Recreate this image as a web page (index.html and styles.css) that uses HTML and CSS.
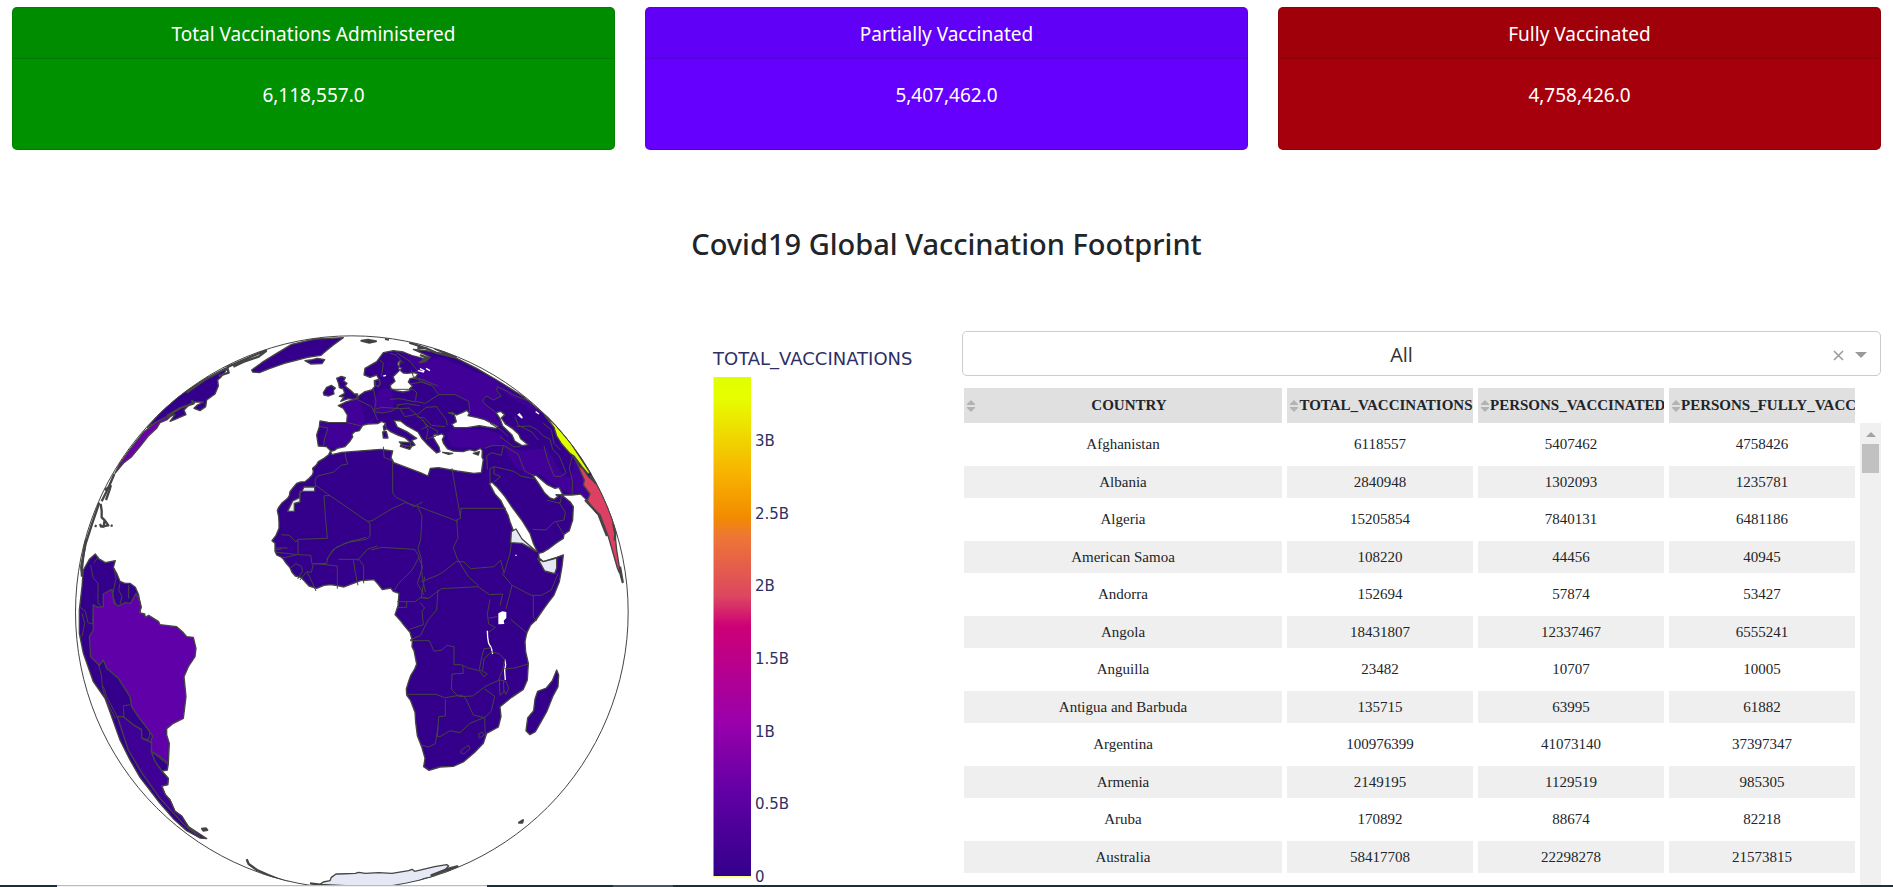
FILE: index.html
```
<!DOCTYPE html>
<html lang="en">
<head>
<meta charset="utf-8">
<title>Covid19 Global Vaccination Footprint</title>
<link rel="stylesheet" href="styles.css">
</head>
<body>
<section class="cards">
  <article class="card card-green"><h2 class="card-title">Total Vaccinations Administered</h2><p class="card-value">6,118,557.0</p></article>
  <article class="card card-violet"><h2 class="card-title">Partially Vaccinated</h2><p class="card-value">5,407,462.0</p></article>
  <article class="card card-red"><h2 class="card-title">Fully Vaccinated</h2><p class="card-value">4,758,426.0</p></article>
</section>
<h1 class="heading">Covid19 Global Vaccination Footprint</h1>
<main class="content">
  <section class="map">
    <div class="globe-wrap">
    <svg class="globe" viewBox="0 0 1740 1695" role="img" aria-label="Vaccinations by country">
      <defs><clipPath id="disc"><circle cx="875.5" cy="876.5" r="830"/></clipPath></defs>
      <g clip-path="url(#disc)">
        <!-- Africa, Arabia and Eurasia -->
        <path class="land" d="M812 392l-6 12-14 11-17 10-6 10-11 10 2 11-3 9-11 11-11 9-13 1-12 4-9 11-11 14-2 12-5 8-18 15-9 12-4 10 4 18 1 18v17l-9 21-12 16 9 8v22l5 13 17 8 11 16 12 14 6 14 10 11 16 4 12 12 13 14 23 7 22-9 20-2 20 3 20 4 20-8 30-11 40-3 12 13 13 17 25-5 8 10 17 6-3 37-9 27 18 20 14 18 13 15 7 25-1 18 6 12 8 40-6 15-12 20-7 20-6 20 1 18 12 17 13 35 2 30 5 40L1085 1280 1095 1315 1091 1340 1107 1351 1140 1341 1180 1339 1210 1326 1245 1296 1270 1270 1280 1240 1315 1221 1323 1190 1320 1160 1355 1132 1390 1108 1402 1080 1405 1030 1397 995 1395 965 1400 940 1412 915 1428 900 1450 868 1463 850 1482 825 1498 785 1506 740 1510 705 1490 712 1450 725 1437 713 1436 700 1448 697 1468 685 1490 668 1510 655 1512 643 1528 632 1534 612 1538 600 1540 560 1530 545 1505 525 1535 525 1562 522 1575 535 1588 548 1600 400 1545 340 1455 285 1390 230 1310 180 1250 145 1190 115 1140 100 1100 92 1060 88 1095 104 1110 112 1100 118 1060 108 1030 96 1000 92 970 98 950 125 915 145 912 165 930 172 950 165 958 180 943 182 944 200 935 210 915 215 900 225 880 240 895 235 860 245 835 257 850 265 862 285 860 308 805 307 780 303 778 320 770 345 775 378 800 380z"/>
        <g class="tint">
          <path d="M1023 98L1100 120 1140 112 1300 178 1380 230 1455 286 1420 270 1380 248 1366 236 1344 226 1324 212 1312 200 1310 216 1324 230 1300 242 1280 230 1268 242 1272 250 1306 276 1310 300 1400 335 1340 325 1282 302 1235 292 1226 285 1230 260 1222 242 1180 226 1140 222 1134 206 1094 188 1074 172 1070 140z"/>
          <path d="M897 238L860 248 842 257 854 265 865 285 862 311 783 309 781 320 803 324 793 350 789 376 832 384 868 370 883 334 940 304 950 276 938 250 950 225 960 208 994 204 1000 240 1000 272 960 276 930 300 920 320z"/>
          <path d="M1160 345l20-20 100 5 50 15-5 25-50 15-100-5z"/>
          <path d="M1322 362L1360 385 1385 392 1455 385 1478 410 1490 440 1520 470 1535 470 1545 405 1570 430 1590 520 1580 536 1562 520 1532 522 1490 500 1440 462 1400 466 1358 430z"/>
        </g>
        <!-- seas -->
        <g class="sea">
          <path d="M812 394l12-3 8-6 23-5 14-15 9-14-2-8 8-8 14-3 10-16 15-4 30-1 12-7 12 6-3 12 16 12 25 12 20 7 15 13-2 10-24-4-3 7 28 9 7-10 9-3-10-14 15-6-30-20-28-14-10-20 20 2 18 14 34 19 12 20 14 15 16 15 14 13 10-4-3-14-10-16-8-14 4-8 12 2 10-4 8 6-6 12 4 12 12 16 16 6 30 2 20-6 16 4 16-8 6 7-1 20 4 6-6 40-23 2-50-7-55-10-25 2-7 23-23-10-40-15-40-15-8-15 5-20-35-5-40 3-50 4-28 2-30 7z"/>
          <path d="M1165 278l12 0 13 7 18-8 12-6 8 8-4 8 28 6 22 6 40 20-6 6-28-4-22-4-37 6-38 0-8-10 14-8-6-20z"/>
          <path d="M1308 278l14-4 12 10-10 10 12 18 22 14 18 17 6 13 22 18-18 3-22-14-8-18-28-27-8-22z"/>
          <path d="M1025 145l-12-10 2-10 6-3-5 25 14 12 12 1 18-2 14 3-8 12-16 3-5 10 12 12-8 8 0 6-20 4-22-4-14-6-2-10 14-12-6-14z"/>
          <path d="M1418 465l12 2 30 26 25 12 12-3 8 15 5 8-22-1 6 6-12 8-12-4-16-15-18-28z"/>
          <path d="M1288 490l8-3 14 13 25 30 20 30 30 40 25 40 10 30 12 25-12-6-40-32-18-20-12-32-6-20-22-44-18-20z"/>
        </g>
        <path class="victoria" d="M1315 880l12-6 12 2v18l-8 8 2 10-18 1z"/>
        <path class="lake" d="M1282 932l1 20 3 18 8 14 4 18M1334 1018l3 16-3 18 2 28M1074 152l18 4M1080 146l14 7M1098 145l12 7M970 168l8-2M1373 283l14 12M1377 280l10 13M1427 275l10 7M1368 704v4"/>
        <path class="nodata" d="M683 574h20v-24l17-4 0-32 28 0h16l0-13-32 0-6 12-8 8 0 12-20 10zM1354 635l14-8 18 30 44 38-44-25-34-2zM1433 715l17 10 40-11v30l-6 17-30-8z"/>
        <!-- islands -->
        <path class="land" d="M830 175l14-6 12 4-5 10 10 7-6 8 18 14 10 10 10 0-3 12-8 4-18-2-22 8 10-13-14-2 16-9-4-13-12-4-2-12zM790 218l10-16 14-6 12 8-6 8 2 10-16 6-14-3zM735 122l22-3 15-4 22 4-8 12-34 1zM575 150l30-22 40-25 50-30 70-16 85-4-30 22-25 20-12 11-40 6-70 18-45 16-30 12-20-2zM970 320l6-8 3 15-7 4zM968 336l11-2 5 20-14 0zM1018 366l34 2 0 12-25-5zM1148 397l30 3-12 3zM1240 400l18-5-3 10zM945 182l12-4 4 12-6 10-9-4zM1490 1050l6 15-2 35-16 30-18 45-18 32-16 28-16 9-12-12 5-38 18-22 4-35 8-23 26-10 18-22z"/>
        <path class="bits" d="M904 62l20-3 24 5-20 4zM975 57l12 2M1377 1508l12-8-2 8zM426 1526l12-1 4 5-12 2z"/>
        <path class="coast" d="M1048 68l30 10 24 9M1072 84l25 0 30 14 60 14-60-25 30 4M1080 105l20 8-20 14 16-4 15-14M122 552l3 20 0 20 10 10 10 14-22 4-3-8M104 617l6 2M134 600l-4 24M152 616l6 2M134 510l18-12-4 14-10 28M78 658l-8 48-4 40M64 740l4 28"/>
        <!-- North America -->
        <path class="land" d="M505 142L484 170 473 180 475 198 465 222 440 240 437 260 420 272 402 265 412 255 430 246 402 246 390 252 372 270 378 284 345 298 330 304 345 284 318 292 300 300 262 322 306 272 360 225 440 175z"/>
        <path class="mexusa" d="M340 282L320 300 300 308 290 325 265 348 240 380 215 410 190 430 165 460 180 430 210 388 250 337 290 305z"/>
        <path class="coast" d="M500 144l-60 32-60 42M620 90l-70 30-50 22M520 140l30-14 46-16 24-18M476 168l30-10-4-14M395 240l6 10-40 14-40 24"/>
        <path class="coast" d="M163 462l-18 42-20 40M118 548l-22 64-20 62-12 64 2 32"/>
        <!-- South America -->
        <path class="land" d="M58 870L66 800 70 750 88 718 106 702 116 716 136 728 166 722 160 742 170 760 180 784 195 790 210 790 226 802 236 825 242 860 240 880 325 1330 322 1350 305 1353 325 1375 323 1394 305 1398 316 1424 330 1440 345 1474 365 1488 385 1520 440 1556 420 1554 380 1532 340 1496 300 1450 240 1372 210 1320 180 1260 150 1176 135 1135 100 1085 70 1000 58 940z"/>
        <path class="brazil" d="M100 855L114 862 130 860 130 822 156 808 162 850 176 858 196 848 212 850 228 820 240 845 244 862 238 878 254 882 256 892 266 886 296 905 300 914 350 920 368 936 380 950 400 952 408 985 405 1010 385 1040 372 1070 378 1130 370 1195 340 1210 320 1226 320 1245 328 1270 325 1330 300 1310 275 1295 272 1265 278 1248 262 1225 235 1190 215 1160 210 1130 175 1075 140 1045 130 1020 118 1036 92 1010 88 950 100 930z"/>
        <path class="land tinted" d="M172 1190L190 1190 222 1216 244 1228 246 1255 262 1262 275 1268 274 1295 285 1324 300 1345 305 1353 325 1375 323 1394 305 1398 316 1424 330 1440 345 1474 365 1488 385 1520 420 1550 380 1522 300 1435 245 1358 205 1290z"/>
        <path class="border" d="M58 860l18 14 8 34 14 4 2-60M66 880l8 30-8 40M92 735l8 40 14 14 0 60 12 14M116 710l-16 20M162 745l6 30-10 50 10 30M180 790l-4 20 10 20-6 22M206 795l0 40M116 1035l8 30 4 40 8 30 30 60M130 1100l10 30 32 60M190 1160l2 30M188 1158l22-4M246 1255l20 4 4-22M275 1295l50 40"/>
        <!-- Asia at the limb -->
        <path class="china" d="M1455 288L1487 315 1530 366 1590 458 1584 462 1566 440 1542 408 1530 400 1505 372 1490 348 1482 322z"/>
        <path class="india" d="M1540 408L1560 440 1568 445 1585 470 1608 490 1622 512 1640 550 1656 592 1665 640 1670 690 1678 740 1678 758 1672 744 1645 650 1620 584 1610 580 1582 542 1590 522 1570 495 1573 480 1552 432z"/>
        <path class="coast" d="M1590 465l18 26M1660 612l6 30-2 20M1680 740l8 46-8-30M1575 540l40 42 26 66"/>
        <!-- Antarctica -->
        <path class="nodata" d="M780 1693l10-7 20-4 4-10 14-10 8 0 50-2 10-3 20 3 40-2 40 2 50-8 10-4 8 6 60-14 36-6 6 4-8 8 14 6-30 14-50 10-60 30z"/>
        <path class="coast" d="M560 1618l6 14 25 18 34 15 30 12 50 18-60-16-40-20M750 1690l30 4M1112 1667l50-20 30-8-80 28"/>
        <!-- African borders -->
        <path class="border" d="M855 398l2 14 6 20-20 4-22 20-48 12-8 12 2 20M766 495l34 25 70 48 60 42 0 40-12 8-60 10-40 22-18 30M808 527l-16 0 4 60 6 68-88 3-6 8-20-20-24-2M714 658l0 46-70 -8M645 684l38 0M645 690l20 -3M714 704l38 2 4 26 44-2 4-18M665 715l50-12M690 745l18-14 16 8 4 14-15 24M720 780l20-25 14 2 6-24M740 755l12 22 16 36M762 730l70 8 0 68M835 718l60 0M880 718l6 40 8 38M897 718l14 20 0 52M870 664l20-4 28-8M892 722l30-34 30-10M804 712l24-30 50-20M922 604l14-2 60-36 40-18 40 12 118 44M970 380l2 32 26 10 0 96 10 14 34 16 20 12 26-14M1072 558l14 30-4 70-8 28M934 690l30-8 100 6 14 22-22 40-40 40-12 20M1074 686l10 30 2 50 10 50M1074 710l14 30-16 50 20 35M1176 445l10 60 16 90-12 4 4 54-14 30 12 34 34 54 30 26M1202 565h136M1200 590l4-26M1354 670l-4 30-18 60-10-40-20 20-70 6-20-20-22-2-38 30-20 12-50 20M1094 770l-10 60 20 6 40-30 110-6 34 24 40-2-8 34M1326 760l30 36 58 30 30 0 30-16 20-50M1356 796l-10 40-8 30M1012 845h54l14-12 22 2M1012 862h28v-18M1080 848l14 16-8 10 4 40-42 14M1134 810l-4 60-26 30-22 46-32 14M1050 962l58 0 14 32 24-4 14-14 22 4 0 54 22 0 20 10 34 8 14 18 10-8-24-14 8-40 6-22 22-2M1176 1062l34-2-2-25M1176 1062l-2 46 22 22 42-2 40-30 40-18 2 46 12-10-2-36M1038 1123l90 0 26 10 52-8 12 12 22 48 34 8 20-20 10-44-30-22M1156 1138l0 50-20 2-4 60 8 0M1140 1250l30-18 30 6 30-28 44-18 2 56M1082 1275l24 6 20-10 8-50M1204 1290l22-14 4 10-18 16-10-4zM1256 1242l10-6 6 10-14 8zM1290 838l-8 44 4 30 20 10-22 16M1312 890l-26 4M1352 898l50 42M1420 826l0 66 10 10M1292 995l26 6 16 18-6 30-12 30 22 6 8 20-8 18-8-14M1334 1046l30-2 40-12M1292 998l-20 18-4 36"/>
        <!-- borders of Europe and the Middle East -->
        <path class="border" d="M780 320l24 4-10 30-4 24M862 308l42 10M895 240l40 20 18 40M940 205l8 40-6 30 24 4 30-6 20-14M1000 208l60 0 10 10-4 26 30 6 40-26-20-28-40-14M990 238l30-2 46 10M1010 255l30-4 40 6M940 270l24-8 56 4 30-2M1020 266l14 24 40-8 24-20 30-2M1046 264l24 20 34 34-20 10M1070 290l24 4 20 22 42 4M1090 300l14 30-6 30M1104 318l30 16-6 14-24 8M1128 258l30 40 4 18M1136 224l50 0 40 20 4 32M1054 150l6 20 24 8 50 20M1050 192l34-6 28 10M1060 175l34 6M990 100l20 6 20 24M960 120l10 10-6 40M1010 98l40 26 24 30-20 4M1275 385l20-8 34 0M1282 448l-2-40 14-10 30 8 6-30M1290 486l0-40 12-6 0 22 20 8-20 16M1302 440l60 14 20 14 40 8M1330 376l44 26 20 50 24 14M1290 310l34 20 20 20M1320 350l40 30 20 0M1306 276l-34-26-4-10 12-12 20 12 24-12-14-16 2-12 26 12 20 12 60 24M1365 290l10 26 40 20 20 24M1370 320l40-2 20 10 20 20 20 10 8 30 20 20 20 50-16 12-20-2-20-50-10-40M1450 310l24 20 8 40 20 20M1538 405l-10 40 10 40-2 36M1418 628l40 2 24-24 30-6 4-24-20-30M1490 608l20 34M1460 540l40 10 6-30"/>
      </g>
      <circle class="limb" cx="875.5" cy="876.5" r="829"/>
    </svg>
    </div>
    <div class="legend">
      <div class="legend-title">TOTAL_VACCINATIONS</div>
      <div class="legend-body">
        <div class="legend-bar"></div>
        <ul class="ticks"><li>3B</li><li>2.5B</li><li>2B</li><li>1.5B</li><li>1B</li><li>0.5B</li><li>0</li></ul>
      </div>
    </div>
  </section>
  <section class="data">
    <div class="picker">
      <select class="picker-select" aria-label="Country"><option>All</option></select>
      <button class="picker-clear" type="button" aria-label="Clear"><svg width="11" height="11" viewBox="0 0 11 11"><path d="M1 1l9 9M10 1l-9 9" stroke="#999" stroke-width="1.5"/></svg></button>
      <svg class="picker-caret" width="12" height="6" viewBox="0 0 12 6"><path d="M0 0h12l-6 6z" fill="#999"/></svg>
    </div>
    <div class="table-area">
      <table class="grid">
        <colgroup><col class="col-name"><col class="col-num"><col class="col-num"><col class="col-num"></colgroup>
        <thead><tr>
          <th><div class="th"><button class="sort" type="button" aria-label="Sort"><svg width="8" height="12" viewBox="0 0 8 12"><path d="M4 0l4 4v1H0V4zM0 7h8v1l-4 4-4-4z"/></svg></button><span>COUNTRY</span></div></th>
          <th><div class="th"><button class="sort" type="button" aria-label="Sort"><svg width="8" height="12" viewBox="0 0 8 12"><path d="M4 0l4 4v1H0V4zM0 7h8v1l-4 4-4-4z"/></svg></button><span>TOTAL_VACCINATIONS</span></div></th>
          <th><div class="th"><button class="sort" type="button" aria-label="Sort"><svg width="8" height="12" viewBox="0 0 8 12"><path d="M4 0l4 4v1H0V4zM0 7h8v1l-4 4-4-4z"/></svg></button><span>PERSONS_VACCINATED</span></div></th>
          <th><div class="th"><button class="sort" type="button" aria-label="Sort"><svg width="8" height="12" viewBox="0 0 8 12"><path d="M4 0l4 4v1H0V4zM0 7h8v1l-4 4-4-4z"/></svg></button><span>PERSONS_FULLY_VACC</span></div></th>
        </tr></thead>
        <tbody>
          <tr><td>Afghanistan</td><td>6118557</td><td>5407462</td><td>4758426</td></tr>
          <tr><td>Albania</td><td>2840948</td><td>1302093</td><td>1235781</td></tr>
          <tr><td>Algeria</td><td>15205854</td><td>7840131</td><td>6481186</td></tr>
          <tr><td>American Samoa</td><td>108220</td><td>44456</td><td>40945</td></tr>
          <tr><td>Andorra</td><td>152694</td><td>57874</td><td>53427</td></tr>
          <tr><td>Angola</td><td>18431807</td><td>12337467</td><td>6555241</td></tr>
          <tr><td>Anguilla</td><td>23482</td><td>10707</td><td>10005</td></tr>
          <tr><td>Antigua and Barbuda</td><td>135715</td><td>63995</td><td>61882</td></tr>
          <tr><td>Argentina</td><td>100976399</td><td>41073140</td><td>37397347</td></tr>
          <tr><td>Armenia</td><td>2149195</td><td>1129519</td><td>985305</td></tr>
          <tr><td>Aruba</td><td>170892</td><td>88674</td><td>82218</td></tr>
          <tr><td>Australia</td><td>58417708</td><td>22298278</td><td>21573815</td></tr>
        </tbody>
      </table>
      <div class="scroll"><svg class="scroll-up" width="10" height="5" viewBox="0 0 10 5"><path d="M0 5h10L5 0z" fill="#a3a3a3"/></svg><div class="thumb"></div></div>
    </div>
  </section>
</main>
<footer class="strip"><span class="strip-light"></span><span class="strip-tab"></span></footer>
</body>
</html>
```
FILE: styles.css
```
* { box-sizing: border-box; }
body {
  margin: 0;
  min-height: 100vh;
  background: #fff;
  color: #212529;
  font-family: "Segoe UI", "Noto Sans", sans-serif;
  overflow: hidden;
}
.cards {
  display: grid;
  grid-template-columns: repeat(3, 1fr);
  gap: 30px;
  padding: 7px 12px 0;
}
.card {
  height: 143px;
  border: 1px solid rgba(0, 0, 0, 0.125);
  border-radius: 5px;
  color: #fff;
  text-align: center;
}
.card-green { background: #009100; }
.card-violet { background: #6500ff; }
.card-red { background: #a5000b; }
.card-title {
  margin: 0;
  padding: 11px 20px 9px;
  border-bottom: 1px solid rgba(0, 0, 0, 0.125);
  background: rgba(0, 0, 0, 0.03);
  font-size: 19px;
  font-weight: 400;
  line-height: 30px;
}
.card-value {
  margin: 0;
  padding: 21px 20px;
  font-size: 19px;
  line-height: 30px;
}
.heading {
  margin: 74px 0 67px;
  font-size: 29px;
  font-weight: 500;
  line-height: 40px;
  text-align: center;
}
.content {
  display: grid;
  grid-template-columns: 959fr 934fr;
}
.map {
  display: grid;
  grid-template-columns: 640fr 319fr;
  margin-top: -11px;
}
.globe-wrap { padding-left: 60px; }
.globe {
  display: block;
  width: 100%;
}
.land, .mexusa, .brazil, .china, .india, .nodata, .sea path {
  stroke: #444;
  stroke-width: 4;
  stroke-linejoin: round;
}
.land { fill: #34008b; }
.tinted { fill: #3f0096; }
.tint { fill: #410098; }
.sea path { fill: #fff; }
.victoria { fill: #fff; }
.nodata { fill: #e5e9f6; }
.mexusa { fill: #6c00a8; }
.brazil { fill: #6000a8; }
.china { fill: #e1ff00; }
.india { fill: #dc4062; }
.lake {
  fill: none;
  stroke: #fff;
  stroke-width: 4;
}
.bits {
  fill: #34008b;
  stroke: #444;
  stroke-width: 6;
  stroke-linejoin: round;
}
.coast {
  fill: none;
  stroke: #444;
  stroke-width: 7;
  stroke-linejoin: round;
}
.border {
  fill: none;
  stroke: #444;
  stroke-width: 3;
  stroke-linejoin: round;
}
.limb {
  fill: none;
  stroke: #444;
  stroke-width: 3;
}
.legend {
  padding: 27px 0 0 73px;
  color: #2f2f66;
  font-family: Verdana, "DejaVu Sans", sans-serif;
}
.legend-title {
  font-size: 18px;
  line-height: 24px;
}
.legend-body {
  display: flex;
  gap: 4px;
  padding-top: 6px;
}
.legend-bar {
  width: 38px;
  height: 500px;
  border: 1px solid rgba(255, 255, 255, 0.5);
  border-top: 0;
  border-right: 0;
  background: linear-gradient(to top, #33008a 0, #6200a5 17%, #9a00ab 31%, #cd0077 50%, #dc4660 56%, #ee7635 68%, #f28c00 72%, #f8b400 81%, #e6ff00 96%, #dfff00 100%);
}
.ticks {
  display: flex;
  flex-direction: column;
  justify-content: space-between;
  height: 454px;
  margin: 55px 0 0;
  padding: 0;
  font-size: 15px;
  line-height: 18px;
  list-style: none;
}
.data { padding-right: 12px; }
.picker {
  position: relative;
  margin-left: 3px;
}
.picker-select {
  display: block;
  width: 100%;
  height: 45px;
  padding: 2px 40px 0 0;
  border: 1px solid #ccc;
  border-radius: 5px;
  background: #fff;
  color: #333;
  font-family: "Segoe UI", "Open Sans", sans-serif;
  font-size: 20px;
  text-align-last: center;
  appearance: none;
}
.picker-clear {
  position: absolute;
  top: 19px;
  right: 37px;
  padding: 0;
  border: 0;
  background: none;
  line-height: 0;
}
.picker-caret {
  position: absolute;
  top: 21px;
  right: 14px;
}
.table-area {
  display: flex;
  padding-top: 7px;
}
.grid {
  flex: 1;
  width: 100%;
  table-layout: fixed;
  padding-bottom: 8px;
  border-spacing: 5px;
  font-family: "Times New Roman", "Liberation Serif", serif;
  font-size: 15px;
}
.col-num { width: 186px; }
.grid th {
  height: 35px;
  padding: 0;
  overflow: hidden;
  background: #e0e0e0;
}
.th {
  display: flex;
  align-items: center;
  padding-left: 3px;
  overflow: hidden;
  white-space: nowrap;
}
.th span {
  flex: 1;
  padding-left: 1px;
}
.sort {
  flex: none;
  padding: 0;
  border: 0;
  background: none;
  line-height: 0;
  fill: #b3b3b3;
}
.grid td {
  height: 33px;
  padding: 0;
  text-align: center;
}
.grid tr:nth-child(even) td {
  height: 32px;
  background: #efefef;
}
.scroll {
  flex: none;
  width: 21px;
  margin-top: 40px;
  padding: 9px 2px;
  background: #f0f0f0;
  text-align: center;
  line-height: 0;
}
.scroll-up { margin-bottom: 7px; }
.thumb {
  height: 29px;
  background: #c1c1c1;
}
.strip {
  position: fixed;
  right: 0;
  bottom: 0;
  left: 0;
  display: flex;
  height: 2px;
  background: #1b2f3b;
}
.strip-light {
  width: 430px;
  margin-left: 57px;
  border-top: 1px solid #bbb;
  background: #f0f0f0;
}
.strip-tab {
  width: 60px;
  margin-left: 126px;
  background: #45555f;
}
```
